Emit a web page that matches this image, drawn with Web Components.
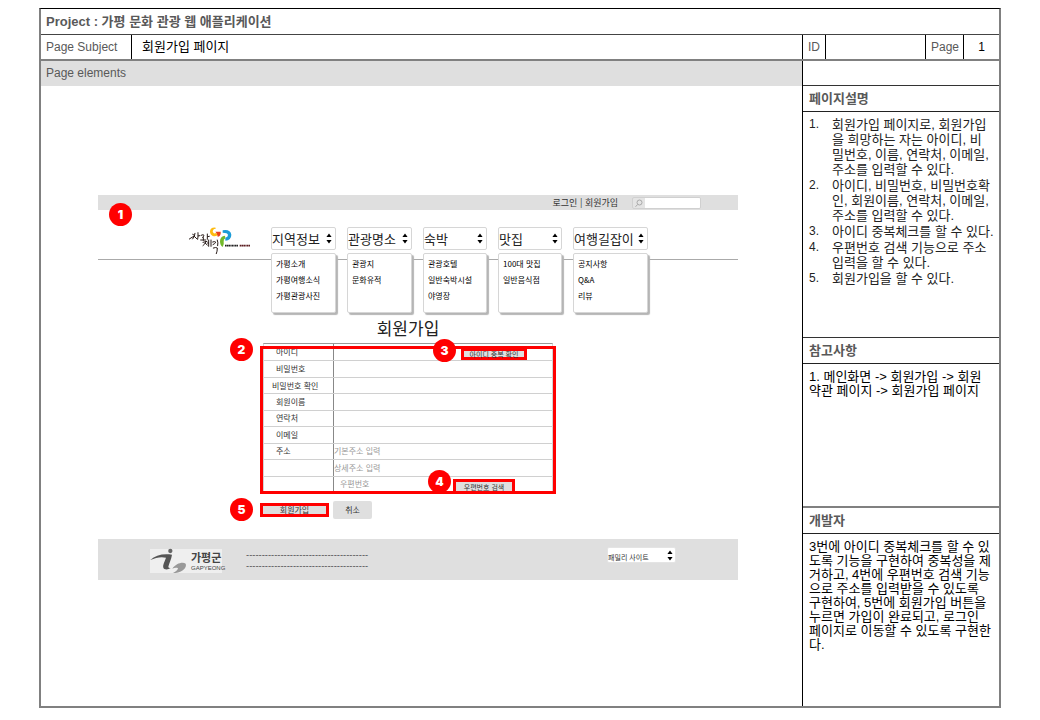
<!DOCTYPE html>
<html lang="ko">
<head>
<meta charset="utf-8">
<title>가평 문화 관광 웹 애플리케이션 - 회원가입 페이지</title>
<style>
  body { margin: 0; background: #fff; color: #000; font: 13px/14px "Liberation Sans", "Noto Sans CJK KR", sans-serif; }
</style>
</head>
<body>
<spec-sheet></spec-sheet>
<script>
const define = (name, html, setup) => {
  const tpl = document.createElement('template');
  tpl.innerHTML = html;
  customElements.define(name, class extends HTMLElement {
    constructor() {
      super();
      this.attachShadow({ mode: 'open' }).append(tpl.content.cloneNode(true));
    }
    connectedCallback() { if (setup) setup(this, this.shadowRoot); }
  });
};

/* Numbered red marker */
define('num-badge', `
<style>
  :host { display: flex; align-items: center; justify-content: center; width: 23px; height: 23px; border-radius: 50%;
    background: #f00; color: #fff; font: 900 12px/12px Inter, "Liberation Sans", sans-serif; }
</style><slot></slot>`);

/* Pair of up/down arrows */
define('stepper-icon', `
<style>:host { display: block; width: 6px; height: 11px; pointer-events: none; } svg { display: block; }</style>
<svg width="6" height="11" viewBox="0 0 6 11" aria-hidden="true"><path d="M3 0.5 5.6 4H.4zM3 10.5 5.6 7H.4z"/></svg>`);

/* Description panel of the right column */
define('spec-panel', `
<style>
  :host { display: flex; flex-direction: column; box-sizing: border-box; }
  h2 { margin: 0; padding: 0 6px; font-size: 13px; line-height: 25px; color: #595959; border-bottom: 1px solid #222; }
  .body { padding: 5px 0 0 6px; }
</style>
<h2></h2><div class="body"><slot></slot></div>`,
(el, root) => { root.querySelector('h2').textContent = el.getAttribute('heading'); });

/* Drop-down with its open list below */
define('nav-menu', `
<style>
  :host { display: flex; flex-direction: column; gap: 3px; }
  .pick { display: grid; align-items: center; }
  .pick > * { grid-area: 1 / 1; }
  select { appearance: none; width: 100%; height: 23px; margin: 0; padding: 0; border: 1px solid #d6d6d6; border-radius: 2px;
    background: #fff; color: #222; font: 13px/20px "Noto Sans CJK KR", sans-serif; }
  stepper-icon { justify-self: end; margin-right: 4px; }
  .list { display: flex; flex-direction: column; flex: 1; padding: 2px 4px 0; border: 1px solid #d6d6d6; border-radius: 2px; background: #fff;
    box-shadow: 2px 2px 1px #b5b5b5; }
  ::slotted(a) { color: #333; text-decoration: none; font: 8px/16px "Noto Sans CJK KR", sans-serif; white-space: nowrap; }
</style>
<div class="pick"><select><option></option></select><stepper-icon></stepper-icon></div>
<div class="list"><slot></slot></div>`,
(el, root) => {
  root.querySelector('option').textContent = el.getAttribute('label');
  root.querySelector('select').setAttribute('aria-label', el.getAttribute('label'));
});

define('brand-logo', `
<style>:host { display: block; width: 62px; height: 32px; } svg { display: block; }</style>
<svg width="62" height="32" viewBox="28 21 186 96" role="img" aria-label="가평">
  <g fill="none" stroke="#2a1d1a" stroke-width="3" stroke-linecap="round" stroke-linejoin="round">
    <path d="M29 57q8-6 16-9M39 43l5 3M46 40q-1 12-7 17M45 50l6 6M55 38q1 12-1 20M55 48l5-1"/>
    <path d="M64 46q8-4 9 0l-4 7M63 60h15M71 53v8M83 42v16M84 50l5-1"/>
    <path d="M70 67l12-3M79 64q-3 10-9 13M77 70l6 5M87 60v19M94 60v19M83 69h4"/>
    <path d="M99 66q7-3 9 0-2 6-8 8M113 60q3 8 1 17M101 84q8-3 12 0 0 10-3 17"/>
  </g>
  <path d="M108 23q-12-2-16 6-4 11 6 18 11 5 18-4l-7-4q-5 3-8-1-4-5 0-9 2-3 7-3z" fill="#fdbb12"/>
  <path d="M107 35h16v6q-2 9-9 9l-2-9z" fill="#e8401c"/>
  <path d="M129 31q23-4 26 13 0 16-18 18v-9q8-1 8-8-1-7-16-7z" fill="#1b9cd8"/>
  <path d="M136 47q-15 2-15 17 0 12 8 17 5-8 3-16-1-7 5-10z" fill="#72b92b"/>
  <path d="M136 77h40" stroke="#222" stroke-width="5" stroke-dasharray="5 1 3 1"/>
  <path d="M180 77h31" stroke="#5b1d20" stroke-width="5" stroke-dasharray="5 1 4 1"/>
</svg>`);

define('site-header', `
<style>
  :host { display: block; font-family: "Noto Sans CJK KR", sans-serif; }
  .top { display: flex; align-items: center; justify-content: flex-end; gap: 14px; height: 15px; padding-right: 37px; background: #dfdfdf; }
  .links { font-size: 9px; line-height: 15px; color: #333; }
  a { color: inherit; text-decoration: none; }
  .search { display: flex; width: 69px; height: 12px; box-sizing: border-box; border: 1px solid #d0d0d0; border-radius: 2px; overflow: hidden; background: #e4e4e4; }
  .search svg { flex: none; width: 12px; height: 10px; }
  .search input { flex: 1; min-width: 0; padding: 0; border: 0; background: #fff; font-size: 8px; outline: 0; }
  .main { position: relative; display: flex; align-items: stretch; gap: 20px; height: 86px; padding: 17px 0 0 91px; }
  .main::before { content: ""; position: absolute; left: 0; right: 0; top: 49px; border-top: 1px solid #aaa; }
  nav { position: relative; display: grid; grid-template-columns: 65px 65px 64px 64px 75px; gap: 11px; }
</style>
<div class="top">
  <div class="links"><a href="#login">로그인</a> | <a href="#join">회원가입</a></div>
  <label class="search">
    <svg viewBox="0 0 12 10" fill="none" stroke="#aaa" aria-hidden="true"><circle cx="6.5" cy="4.5" r="2.5"/><path d="M4.700 6.400 2.500 8.800"/></svg>
    <input type="search" aria-label="검색">
  </label>
</div>
<div class="main">
  <brand-logo></brand-logo>
  <nav>
    <nav-menu label="지역정보"><a href="#a1">가평소개</a><a href="#a2">가평여행소식</a><a href="#a3">가평관광사진</a></nav-menu>
    <nav-menu label="관광명소"><a href="#b1">관광지</a><a href="#b2">문화유적</a></nav-menu>
    <nav-menu label="숙박"><a href="#c1">관광호텔</a><a href="#c2">일반숙박시설</a><a href="#c3">야영장</a></nav-menu>
    <nav-menu label="맛집"><a href="#d1">100대 맛집</a><a href="#d2">일반음식점</a></nav-menu>
    <nav-menu label="여행길잡이"><a href="#e1">공지사항</a><a href="#e2">Q&amp;A</a><a href="#e3">리뷰</a></nav-menu>
  </nav>
</div>`);

define('signup-form', `
<style>
  :host { display: block; width: 290px; font: 8px/10px "Noto Sans CJK KR", sans-serif; color: #333; }
  h1 { margin: 0; font-size: 17px; line-height: 30px; font-weight: 400; text-align: center; color: #222; }
  .fields { position: relative; display: grid; grid-auto-rows: 1fr; height: 150px; box-sizing: border-box; border: 1px solid #d4d4d4; border-top-color: #999; }
  .row { display: flex; min-height: 0; }
  .row + .row { border-top: 1px solid #d0d0d0; }
  .name { display: flex; align-items: center; flex: none; width: 70px; box-sizing: border-box; padding-left: 12px; border-right: 1px solid #888; }
  .name.wide { padding-left: 8px; }
  input { flex: 1; min-width: 0; padding: 0; border: 0; background: none; font: inherit; outline: 0; }
  input::placeholder { color: #999; opacity: 1; }
  .zip { padding-left: 6px; }
  button { margin: 0; padding: 0; font: inherit; color: #333; background: #dfdfdf; border: 3px solid #f00; box-sizing: border-box; white-space: nowrap; }
  .check { align-self: flex-end; width: 66px; height: 12px; margin-right: 25px; font-size: 7px; line-height: 6px; }
  .post { align-self: flex-end; width: 62px; height: 13px; margin-right: 37px; border-bottom: 0; font-size: 7px; line-height: 10px; }
  .frame { position: absolute; inset: 2px -4px -2px; border: 3px solid #f00; pointer-events: none; }
  num-badge { position: absolute; }
  .b2 { left: -34px; top: -6px; } .b3 { left: 169px; top: -5px; } .b4 { left: 164px; top: 126px; }
  .actions { position: relative; display: flex; gap: 4px; margin: 8px 0 0 -3px; height: 18px; align-items: center; }
  .actions button { height: 14px; }
  .join { width: 69px; line-height: 8px; }
  .actions .cancel { width: 39px; height: 18px; border: 0; border-radius: 2px; }
  .b5 { left: -30px; top: -3px; }
</style>
<h1>회원가입</h1>
<form>
  <div class="fields">
    <div class="row"><label class="name" for="id">아이디</label><input id="id"><button type="button" class="check">아이디 중복 확인</button></div>
    <div class="row"><label class="name" for="pw">비밀번호</label><input id="pw" type="password"></div>
    <div class="row"><label class="name wide" for="pw2">비밀번호 확인</label><input id="pw2" type="password"></div>
    <div class="row"><label class="name" for="nm">회원이름</label><input id="nm"></div>
    <div class="row"><label class="name" for="tel">연락처</label><input id="tel" type="tel"></div>
    <div class="row"><label class="name" for="mail">이메일</label><input id="mail" type="email"></div>
    <div class="row"><label class="name" for="addr">주소</label><input id="addr" placeholder="기본주소 입력"></div>
    <div class="row"><span class="name"></span><input aria-label="상세주소" placeholder="상세주소 입력"></div>
    <div class="row"><span class="name"></span><input class="zip" aria-label="우편번호" placeholder="우편번호"><button type="button" class="post">우편번호 검색</button></div>
    <div class="frame"></div>
    <num-badge class="b2">2</num-badge><num-badge class="b3">3</num-badge><num-badge class="b4">4</num-badge>
  </div>
  <div class="actions"><button type="button" class="join">회원가입</button><button type="reset" class="cancel">취소</button><num-badge class="b5">5</num-badge></div>
</form>`);

define('site-footer', `
<style>
  :host { display: flex; align-items: flex-start; height: 41px; box-sizing: border-box; padding: 8px 62px 0 52px; background: #dfdfdf; font-family: "Noto Sans CJK KR", sans-serif; color: #444; }
  .mark { display: flex; align-items: center; gap: 4px; width: 72px; height: 24px; margin-top: 2px; background: #efefef; }
  .mark svg { flex: none; width: 37px; height: 26px; }
  .mark b { display: block; font-size: 11px; line-height: 14px; }
  .mark small { display: block; font: 6px/8px "Liberation Sans", sans-serif; }
  .lines { margin: 3px 0 0 24px; font-size: 9px; line-height: 11px; color: #333; white-space: nowrap; }
  .pick { display: grid; align-items: center; width: 69px; margin-left: auto; }
  .pick > * { grid-area: 1 / 1; }
  select { appearance: none; width: 100%; height: 16px; margin: 0; padding: 4px 0 0; border: 1px solid #e4e4e4; border-radius: 2px; background: #fff; color: #333; font: 7px/10px "Noto Sans CJK KR", sans-serif; }
  stepper-icon { justify-self: end; margin-right: 3px; }
</style>
<div class="mark">
  <svg viewBox="0 0 111 78" aria-hidden="true">
    <circle cx="61" cy="9" r="6.500" fill="#666"/>
    <path d="M1 36C16 22 38 16 66 20 64 34 57 46 55 56q0 5 7 4-10 7-19 3-6-5-2-16l7-18C33 25 17 29 1 36z" fill="#555"/>
    <path d="M67 62c10-16 32-22 40-15 5 14-14 28-38 28 10-5 15-10 15-14-5-3-12-1-17 1z" fill="#999"/>
  </svg>
  <div><b>가평군</b><small>GAPYEONG</small></div>
</div>
<div class="lines">---------------------------------------<br>---------------------------------------</div>
<div class="pick"><select aria-label="패밀리 사이트"><option>패밀리 사이트</option></select><stepper-icon></stepper-icon></div>`);

define('page-mockup', `
<style>
  :host { display: block; position: relative; }
  signup-form { margin: 0 0 20px 165px; }
  num-badge { position: absolute; left: 11px; top: 8px; }
</style>
<site-header></site-header>
<signup-form></signup-form>
<site-footer></site-footer>
<num-badge>1</num-badge>`);

define('spec-sheet', `
<style>
  :host { display: block; margin: 8px 39px; border: 2px solid #808080; border-top: 1px solid #000; }
  .label { font-size: 12px; color: #595959; }
  .project { margin: 0; padding: 0 5px; font-size: 13px; line-height: 25px; color: #595959; border-bottom: 1px solid #444; }
  .info { display: grid; grid-template-columns: 90px 1fr 23px 100px 38px 36px; line-height: 24px; border-bottom: 2px solid #808080; }
  .info > * { padding-left: 5px; }
  .info > * + * { border-left: 1px solid #000; }
  .info .subject { padding-left: 10px; }
  .info .no { padding: 0; text-align: center; font-size: 12px; }
  .cols { display: grid; grid-template-columns: minmax(0, 1fr) 197px; min-height: 645px; }
  .elements { line-height: 25px; padding-left: 5px; background: #dfdfdf; }
  page-mockup { margin: 109px 64px 40px 57px; }
  aside { display: grid; box-sizing: border-box; grid-template-rows: 25px 252px 170px 1fr; border-left: 1px solid #000; }
  aside > * { border-bottom: 1px solid #333; }
  aside > :last-child { border-bottom: 0; }
  .notes { border-bottom: 2px solid #808080; }
  ol { margin: 0; padding: 0 0 0 23px; list-style: none; line-height: 15px; color: #222; white-space: nowrap; counter-reset: n; }
  li { counter-increment: n; margin-bottom: 1px; }
  li::before { content: counter(n) "."; float: left; margin-left: -23px; font-size: 12px; }
  p { margin: 1px 0 0; white-space: nowrap; }
</style>
<h1 class="project">Project : 가평 문화 관광 웹 애플리케이션</h1>
<div class="info">
  <div class="label">Page Subject</div><div class="subject">회원가입 페이지</div>
  <div class="label">ID</div><div></div><div class="label">Page</div><div class="no">1</div>
</div>
<div class="cols">
  <main>
    <div class="elements label">Page elements</div>
    <page-mockup></page-mockup>
  </main>
  <aside>
    <div></div>
    <spec-panel heading="페이지설명"><ol>
      <li>회원가입 페이지로, 회원가입<br>을 희망하는 자는 아이디, 비<br>밀번호, 이름, 연락처, 이메일,<br>주소를 입력할 수 있다.</li>
      <li>아이디, 비밀번호, 비밀번호확<br>인, 회원이름, 연락처, 이메일,<br>주소를 입력할 수 있다.</li>
      <li>아이디 중복체크를 할 수 있다.</li>
      <li>우편번호 검색 기능으로 주소<br>입력을 할 수 있다.</li>
      <li>회원가입을 할 수 있다.</li>
    </ol></spec-panel>
    <spec-panel class="notes" heading="참고사항"><p>1. 메인화면 -&gt; 회원가입 -&gt; 회원<br>약관 페이지 -&gt; 회원가입 페이지</p></spec-panel>
    <spec-panel heading="개발자"><p>3번에 아이디 중복체크를 할 수 있<br>도록 기능을 구현하여 중복성을 제<br>거하고, 4번에 우편번호 검색 기능<br>으로 주소를 입력받을 수 있도록<br>구현하여, 5번에 회원가입 버튼을<br>누르면 가입이 완료되고, 로그인<br>페이지로 이동할 수 있도록 구현한<br>다.</p></spec-panel>
  </aside>
</div>`);
</script>
</body>
</html>
